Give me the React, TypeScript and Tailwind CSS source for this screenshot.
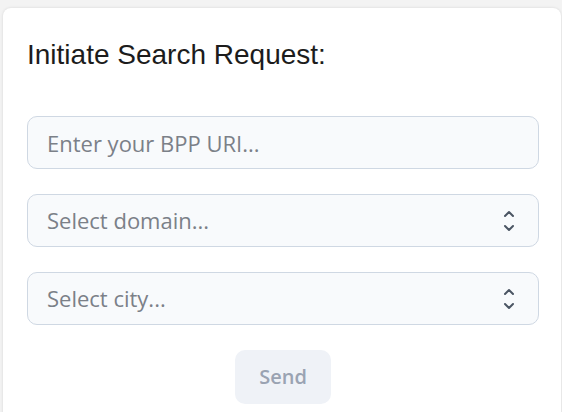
import { useState } from 'react';

function UpDownIcon() {
  return (
    <svg
      width="12"
      height="22"
      viewBox="0 0 12 22"
      fill="none"
      stroke="#4b5563"
      strokeWidth="2"
      strokeLinecap="round"
      strokeLinejoin="round"
      className="pointer-events-none absolute right-6 top-1/2 -translate-y-1/2"
    >
      <polyline points="2,6 6,2 10,6" />
      <polyline points="2,16 6,20 10,16" />
    </svg>
  );
}

const fieldClass =
  'w-full h-[53px] rounded-[10px] border border-[#cfd8e3] bg-[#f8fafc] px-[19px] text-[22px] outline-none';

export default function App() {
  const [uri, setUri] = useState('');
  const [domain, setDomain] = useState('');
  const [city, setCity] = useState('');

  return (
    <div className="min-h-screen bg-[#f3f3f3] pt-2 pl-[3px] overflow-hidden">
      <div className="w-[558px] min-h-[420px] rounded-lg bg-white pt-[31px] pl-6 pr-[22px] pb-6 shadow-[0_0_3px_rgba(0,0,0,0.12)]">
        {/* Header */}
        <h2 className="mb-[45px] text-[28px] leading-8 text-[#1c1c1c] font-['Liberation_Sans',Arial,sans-serif]">
          Initiate Search Request:
        </h2>

        <div className="flex flex-col gap-[25px] font-['Open_Sans',sans-serif]">
          <input
            type="text"
            value={uri}
            onChange={(e) => setUri(e.target.value)}
            placeholder="Enter your BPP URI..."
            className={`${fieldClass} text-[#374151] placeholder:text-[#7b8088]`}
          />

          <div className="relative">
            <select
              value={domain}
              onChange={(e) => setDomain(e.target.value)}
              className={`${fieldClass} appearance-none ${domain ? 'text-[#374151]' : 'text-[#7b8088]'}`}
            >
              <option value="" disabled>
                Select domain...
              </option>
              <option value="retail">Retail</option>
              <option value="mobility">Mobility</option>
            </select>
            <UpDownIcon />
          </div>

          <div className="relative">
            <select
              value={city}
              onChange={(e) => setCity(e.target.value)}
              className={`${fieldClass} appearance-none ${city ? 'text-[#374151]' : 'text-[#7b8088]'}`}
            >
              <option value="" disabled>
                Select city...
              </option>
              <option value="blr">Bangalore</option>
              <option value="del">Delhi</option>
            </select>
            <UpDownIcon />
          </div>

          <div className="flex justify-center">
            <button
              type="button"
              disabled
              className="h-[54px] w-[96px] rounded-[10px] bg-[#eff2f7] text-[20px] font-semibold text-[#9aa3b2]"
            >
              Send
            </button>
          </div>
        </div>
      </div>
    </div>
  );
}
